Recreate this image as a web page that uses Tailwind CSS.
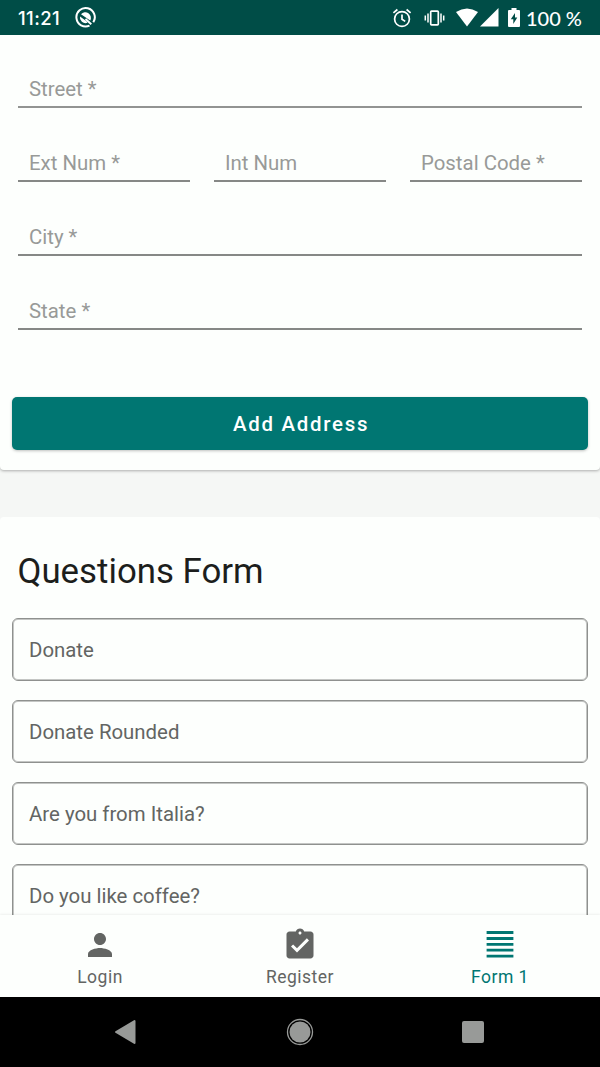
<!DOCTYPE html>
<html lang="en">
<head>
<meta charset="utf-8">
<meta name="viewport" content="width=device-width">
<title>Form 1</title>
<script src="https://cdn.jsdelivr.net/npm/@tailwindcss/browser@4"></script>
</head>
<body class="bg-[#f5f7f5]">
<div class="flex h-[1067px] w-[600px] flex-col overflow-hidden bg-[#f5f7f5] font-['Roboto',sans-serif] text-[20.4px] leading-6">
  <header class="flex h-[35px] shrink-0 items-center bg-[#004d47] pl-[18px] pr-[18px] font-['Lato',sans-serif] text-white">
    <span class="w-[57px] shrink-0 whitespace-nowrap pt-px font-['Inter',sans-serif] text-[18.5px] font-medium tracking-[0.4px]">11:21</span>
    <svg class="h-[21px] w-[21px] shrink-0" viewBox="0 0 21 21" fill="none" stroke="#fff"><path d="M14.5 18.600A9.200 9.200 0 1 1 18.300 15.300" stroke-width="2"/><path d="M6 7.200A5.600 5.600 0 0 1 15.200 13.500Z" fill="#fff" stroke="none"/><path d="M5 9.500A5.600 5.600 0 0 0 12.500 15.800L11.500 14.200Z" fill="#fff" stroke="none"/><path d="M10.500 12L16.300 17.300" stroke-width="1.900"/></svg>
    <span class="grow"></span>
    <div class="flex items-center">
      <svg class="mr-[12px] h-[20px] w-[20px]" viewBox="0 0 20 20" fill="none" stroke="#fff" stroke-width="1.7"><circle cx="10" cy="11" r="7.4"/><path d="M10 6.5V11.2L13.2 13.4M1.4 4.8L5.4 1.5M18.6 4.8L14.6 1.5"/></svg>
      <svg class="mr-[11px] h-[18px] w-[21px]" viewBox="0 0 21 18" fill="none" stroke="#fff" stroke-width="1.5"><rect x="6.7" y="2.2" width="7.6" height="13.6" rx=".8" stroke-width="1.7"/><path d="M4 4.5V13.5M1.3 6.5V11.5M17 4.5V13.5M19.7 6.5V11.5"/></svg>
      <svg class="mr-[2px] h-[19px] w-[22px]" viewBox="0 0 22 19" fill="#fff"><path d="M0 4Q11-3 22 4L11 18.5Z"/></svg>
      <svg class="mr-[9px] h-[19px] w-[19px]" viewBox="0 0 19 19" fill="#fff"><path d="M18.5 0V18.5H0Z"/></svg>
      <svg class="mr-[6px] h-[19px] w-[12px]" viewBox="0 0 12 19" fill="#fff"><path d="M1 2H3.5V0H8.5V2H11Q12 2 12 3V18Q12 19 11 19H1Q0 19 0 18V3Q0 2 1 2Z"/><path d="M7 5L2.8 11.2H5.3V16L9.3 9.6H7Z" fill="#004d47"/></svg>
      <span class="w-[56px] whitespace-nowrap text-[20px] font-medium">100 %</span>
    </div>
  </header>

  <main class="flex min-h-0 grow flex-col overflow-hidden">
    <section class="flex h-[435px] shrink-0 flex-col rounded-b-[4px] bg-[#fdfffd] px-[12px] pt-[21px] shadow-[0_1px_3px_rgba(0,0,0,0.3)]">
      <div class="flex flex-col gap-[22px] px-[5.6px] text-[#989a98]">
        <div class="h-[52px] border-b-2 border-[#929492] pl-[11.4px] pt-[21px]">Street *</div>
        <div class="grid grid-cols-3 gap-[23.2px]">
          <div class="h-[52px] border-b-2 border-[#868886] pl-[11.4px] pt-[21px]">Ext Num *</div>
          <div class="h-[52px] border-b-2 border-[#868886] pl-[11.4px] pt-[21px]">Int Num</div>
          <div class="h-[52px] border-b-2 border-[#868886] pl-[11.4px] pt-[21px]">Postal Code *</div>
        </div>
        <div class="h-[52px] border-b-2 border-[#868886] pl-[11.4px] pt-[21px]">City *</div>
        <div class="h-[52px] border-b-2 border-[#868886] pl-[11.4px] pt-[21px]">State *</div>
      </div>
      <button class="mt-[67px] h-[53px] rounded-[5px] bg-[#007672] pl-[2px] pt-[1px] font-medium tracking-[1.75px] text-white shadow-[0_1px_3px_rgba(0,0,0,0.25)]">Add Address</button>
    </section>

    <section class="mt-[47px] flex shrink-0 flex-col rounded-t-[4px] bg-[#fdfffd] px-[12px] pt-[33px] text-[#636563]">
      <h1 class="pl-[5.5px] text-[34.8px] leading-[42px] text-[#1c1e1c]">Questions Form</h1>
      <div class="mt-[26px] flex flex-col gap-[19px]">
        <div class="h-[63px] rounded-[6px] border border-[#8f918f] pl-[16px] pt-[19px] shadow-[inset_0_0_0_1px_#c4c6c4]">Donate</div>
        <div class="h-[63px] rounded-[6px] border border-[#8f918f] pl-[16px] pt-[19px] shadow-[inset_0_0_0_1px_#c4c6c4]">Donate Rounded</div>
        <div class="h-[63px] rounded-[6px] border border-[#8f918f] pl-[16px] pt-[19px] shadow-[inset_0_0_0_1px_#c4c6c4]">Are you from Italia?</div>
        <div class="h-[63px] rounded-[6px] border border-[#8f918f] pl-[16px] pt-[19px] shadow-[inset_0_0_0_1px_#c4c6c4]">Do you like coffee?</div>
      </div>
    </section>
  </main>

  <nav class="z-10 grid h-[82px] shrink-0 grid-cols-3 bg-[#fdfffd] text-center text-[17.5px] tracking-[0.5px] text-[#636563] shadow-[0_-1px_2px_rgba(0,0,0,0.06)]">
    <div class="flex flex-col items-center pt-[12px]">
      <svg class="h-[36px] w-[36px]" viewBox="0 0 24 24" fill="#636563"><path d="M12 12c2.21 0 4-1.79 4-4s-1.79-4-4-4-4 1.79-4 4 1.79 4 4 4zm0 2c-2.67 0-8 1.34-8 4v2h16v-2c0-2.66-5.33-4-8-4z"/></svg>
      <span class="mt-[2px]">Login</span>
    </div>
    <div class="flex flex-col items-center pt-[12px]">
      <svg class="h-[36px] w-[36px]" viewBox="0 0 24 24" fill="#636563"><path d="M19 3h-4.18C14.4 1.84 13.3 1 12 1c-1.3 0-2.4.84-2.82 2H5c-1.1 0-2 .9-2 2v14c0 1.1.9 2 2 2h14c1.1 0 2-.9 2-2V5c0-1.1-.9-2-2-2zm-7 0c.55 0 1 .45 1 1s-.45 1-1 1-1-.45-1-1 .45-1 1-1zm-2 14l-4-4 1.41-1.41L10 14.17l6.59-6.59L18 9l-8 8z"/></svg>
      <span class="mt-[2px]">Register</span>
    </div>
    <div class="flex flex-col items-center pt-[12px] text-[#007672]">
      <svg class="h-[36px] w-[36px]" viewBox="0 0 36 36" fill="#007672"><path d="M4.600 4h26.800v3H4.600zM4.600 10h26.800v3H4.600zM4.600 16h26.800v2.800H4.600zM4.600 21.800h26.800v2.800H4.600zM4.600 27.800h26.800v2.800H4.600z"/></svg>
      <span class="mt-[2px]">Form 1</span>
    </div>
  </nav>

  <footer class="z-10 flex h-[70px] shrink-0 items-center bg-black pl-[114px]">
    <svg class="h-[26px] w-[22px]" viewBox="0 0 22 26"><path d="M20.500 2V24L2 13Z" fill="#989a98" stroke="#989a98" stroke-width="2" stroke-linejoin="round"/></svg>
    <svg class="ml-[150px] h-[28px] w-[28px]" viewBox="0 0 28 28"><circle cx="14" cy="14" r="12.500" fill="none" stroke="#989a98" stroke-width="1.300"/><circle cx="14" cy="14" r="10.500" fill="#989a98"/></svg>
    <div class="ml-[148px] h-[22px] w-[22px] rounded-[2px] bg-[#989a98]"></div>
  </footer>
</div>
</body>
</html>
